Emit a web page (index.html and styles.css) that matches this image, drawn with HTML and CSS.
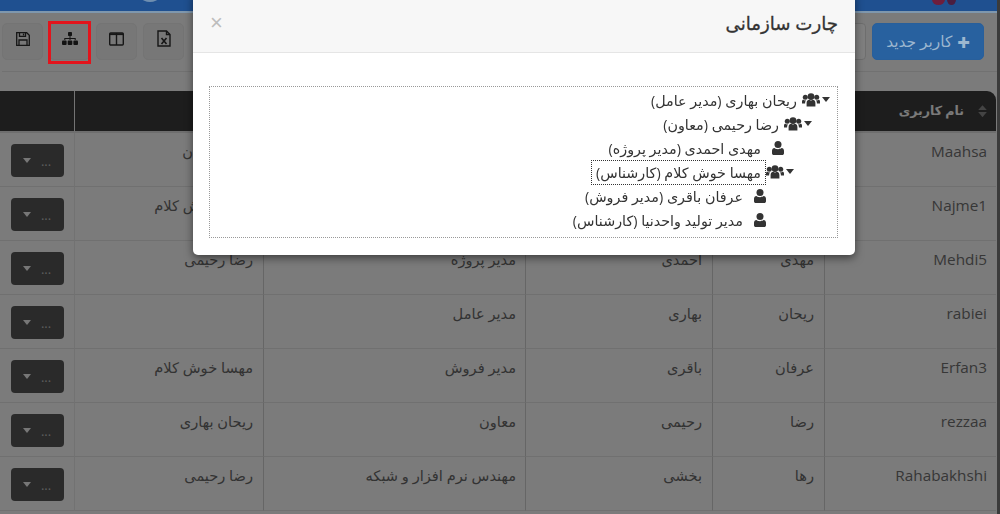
FILE: index.html
```html
<!DOCTYPE html>
<html lang="fa" dir="rtl">
<head>
  <meta charset="UTF-8">
  <meta name="viewport" content="width=device-width, initial-scale=1.0">
  <title>مدیریت کاربران</title>
  <link rel="stylesheet" href="styles.css">
</head>
<body>
  <svg class="icon-defs" width="0" height="0">
    <defs>
      <symbol id="i-users" viewBox="0 0 18 14">
        <circle cx="9" cy="3.6" r="3.4"/>
        <circle cx="3.3" cy="4.3" r="2.5"/>
        <circle cx="14.7" cy="4.3" r="2.5"/>
        <path d="M4.6 13.6V10c0-2 1.4-3.2 2.6-3.2.6.5 1.1.8 1.8.8s1.200-.3 1.800-.8c1.200 0 2.600 1.200 2.600 3.200v3.600z"/>
        <path d="M0 10.400V8.400c0-.9.600-1.600 1.500-1.600.5.400 1 .6 1.700.6.300 0 .6 0 .9-.1-.7.800-1 1.700-1 2.700v.4zM18 10.400V8.400c0-.9-.6-1.600-1.500-1.600-.5.400-1 .6-1.700.6-.3 0-.6 0-.9-.1.700.800 1 1.700 1 2.700v.4z"/>
      </symbol>
      <symbol id="i-user" viewBox="0 0 12 14">
        <circle cx="6" cy="3.500" r="3.500"/>
        <path d="M0 12.200V9.800c0-1.500 1-2.700 2.400-2.700.9.800 2.200 1.200 3.600 1.200s2.700-.4 3.600-1.200c1.400 0 2.400 1.200 2.400 2.700v2.400c0 1-.8 1.800-1.800 1.800H1.800C.8 14 0 13.200 0 12.200z"/>
      </symbol>
    </defs>
  </svg>

  <header class="topbar">
    <span class="logo-light"></span>
    <span class="logo-dark"></span>
    <span class="logo-dark logo-dark-2"></span>
  </header>

  <div class="toolbar">
    <div class="toolbar-main">
      <button class="btn btn-primary"><span class="plus">&#10010;</span> کاربر جدید</button>
      <input class="search" type="text">
    </div>
    <div class="toolbar-tools">
      <button class="btn btn-tool" title="خروجی">
        <svg width="16" height="17" viewBox="0 0 16 17" fill="none" stroke="#2c2c2c" stroke-width="1.400"><path d="M2 1h8.500l3.500 3.500V16H2z"/><path d="M10.500 1v3.500H14"/><path d="M5.500 8l5 6M10.500 8l-5 6" stroke-width="1.600"/></svg>
      </button>
      <button class="btn btn-tool" title="ستون ها">
        <svg width="15" height="14" viewBox="0 0 15 14" fill="none" stroke="#2c2c2c" stroke-width="1.400"><rect x=".7" y="1" width="13.600" height="12" rx="1"/><path d="M7.500 1v12"/><path d="M.7 2.200h13.600" stroke-width="1.800"/></svg>
      </button>
      <button class="btn btn-tool btn-marked" title="چارت سازمانی">
        <svg width="16" height="13" viewBox="0 0 16 13" fill="#262626"><rect x="6" y="0" width="4" height="4" rx=".8"/><path d="M7.500 4h1v2h5.200v2h-1V7H8.500v1h-1V7H3.300v1h-1V6h5.200z"/><rect x="0" y="8.500" width="4.600" height="4.500" rx="1"/><rect x="5.700" y="8.500" width="4.600" height="4.500" rx="1"/><rect x="11.400" y="8.500" width="4.600" height="4.500" rx="1"/></svg>
        <span class="red-mark"></span>
      </button>
      <button class="btn btn-tool" title="ذخیره">
        <svg width="14" height="14" viewBox="0 0 14 14" fill="none" stroke="#2c2c2c" stroke-width="1.300"><path d="M.7.7h10l2.600 2.600v10H.7z"/><path d="M3.500.7v3.600h6V.7"/><path d="M7.500 1.500v2"/><path d="M3 13.300V8h8v5.300"/></svg>
      </button>
    </div>
  </div>

  <div class="table-wrap">
    <table class="users">
      <colgroup>
        <col class="col-user"><col class="col-name"><col class="col-family"><col class="col-job"><col class="col-boss"><col class="col-act">
      </colgroup>
      <thead>
        <tr>
          <th><span class="sort"></span>نام کاربری</th>
          <th>نام</th>
          <th>نام خانوادگی</th>
          <th>سمت</th>
          <th>مدیر</th>
          <th></th>
        </tr>
      </thead>
      <tbody>
        <tr><td class="latin">Maahsa</td><td>مهسا</td><td>خوش کلام</td><td>کارشناس</td><td>رضا رضایان</td><td class="act"><button class="btn-more">... <span class="caret"></span></button></td></tr>
        <tr><td class="latin">Najme1</td><td></td><td></td><td></td><td>مهسا خوش کلام</td><td class="act"><button class="btn-more">... <span class="caret"></span></button></td></tr>
        <tr><td class="latin">Mehdi5</td><td>مهدی</td><td>احمدی</td><td>مدیر پروژه</td><td>رضا رحیمی</td><td class="act"><button class="btn-more">... <span class="caret"></span></button></td></tr>
        <tr><td class="latin">rabiei</td><td>ریحان</td><td>بهاری</td><td>مدیر عامل</td><td></td><td class="act"><button class="btn-more">... <span class="caret"></span></button></td></tr>
        <tr><td class="latin">Erfan3</td><td>عرفان</td><td>باقری</td><td>مدیر فروش</td><td>مهسا خوش کلام</td><td class="act"><button class="btn-more">... <span class="caret"></span></button></td></tr>
        <tr><td class="latin">rezzaa</td><td>رضا</td><td>رحیمی</td><td>معاون</td><td>ریحان بهاری</td><td class="act"><button class="btn-more">... <span class="caret"></span></button></td></tr>
        <tr><td class="latin">Rahabakhshi</td><td>رها</td><td>بخشی</td><td>مهندس نرم افزار و شبکه</td><td>رضا رحیمی</td><td class="act"><button class="btn-more">... <span class="caret"></span></button></td></tr>
      </tbody>
    </table>
  </div>

  <div class="backdrop"></div>

  <div class="modal">
    <div class="modal-header">
      <h4 class="modal-title">چارت سازمانی</h4>
      <span class="close">&times;</span>
    </div>
    <div class="modal-body">
      <ul class="tree">
        <li class="node level-0">
          <span class="expander"><span class="caret"></span></span>
          <svg class="node-icon icon-users"><use href="#i-users"/></svg>
          <span class="node-title">ریحان بهاری (مدیر عامل)</span>
        </li>
        <li class="node level-1">
          <span class="expander"><span class="caret"></span></span>
          <svg class="node-icon icon-users"><use href="#i-users"/></svg>
          <span class="node-title">رضا رحیمی (معاون)</span>
        </li>
        <li class="node level-2">
          <span class="expander"></span>
          <svg class="node-icon icon-user"><use href="#i-user"/></svg>
          <span class="node-title">مهدی احمدی (مدیر پروژه)</span>
        </li>
        <li class="node level-2">
          <span class="expander"><span class="caret"></span></span>
          <svg class="node-icon icon-users"><use href="#i-users"/></svg>
          <span class="node-title node-focused">مهسا خوش کلام (کارشناس)</span>
        </li>
        <li class="node level-3">
          <span class="expander"></span>
          <svg class="node-icon icon-user"><use href="#i-user"/></svg>
          <span class="node-title">عرفان باقری (مدیر فروش)</span>
        </li>
        <li class="node level-3">
          <span class="expander"></span>
          <svg class="node-icon icon-user"><use href="#i-user"/></svg>
          <span class="node-title">مدیر تولید واحدنیا (کارشناس)</span>
        </li>
      </ul>
    </div>
  </div>
</body>
</html>
```

FILE: styles.css
```css
* {
  box-sizing: border-box;
}

html, body {
  height: 514px;
  overflow: hidden;
}

body {
  margin: 0;
  background: #f6f6f6;
  border-right: 3px solid #777;
  color: #666;
  font-family: "Open Sans", "DejaVu Sans", sans-serif;
  font-size: 14px;
}

.icon-defs {
  position: absolute;
}

/* Top bar, kept over the backdrop with its dimmed colour */
.topbar {
  height: 13px;
  background: #1f5090;
  border-bottom: 2px solid #7f97ad;
  overflow: hidden;
  position: relative;
  z-index: 1045;
}

.logo-dark {
  position: absolute;
  right: 52px;
  top: -6px;
  width: 13px;
  height: 11px;
  background: #6e1e3c;
  border-radius: 50%;
}

.logo-dark-2 {
  right: 41px;
  width: 9px;
  background: #4a1e40;
}

.logo-light {
  position: absolute;
  left: 142px;
  top: -6px;
  width: 16px;
  height: 8px;
  background: #6f8fb0;
  border-radius: 50%;
}

/* Toolbar */
.toolbar {
  display: flex;
  justify-content: space-between;
  height: 59px;
  margin: 0 0 0 2px;
  padding: 10px 13px 0 0;
  border-bottom: 1px solid #e3e3e3;
}

.toolbar-main, .toolbar-tools {
  display: flex;
  gap: 6px;
  height: 37px;
}

.btn {
  height: 37px;
  border: 1px solid #e8e8e8;
  border-radius: 5px;
  background: #eeeeee;
  font-family: inherit;
  padding: 0;
  display: flex;
  align-items: center;
  justify-content: center;
}

.btn-primary {
  width: 112px;
  background: #28619f;
  border-color: #285f9b;
  color: #9db7cf;
  font-size: 15.400px;
  gap: 5px;
  position: relative;
  z-index: 1045;
}

.plus {
  font-size: 15px;
}

.search {
  width: 300px;
  height: 37px;
  border: 1px solid #ddd;
  border-radius: 4px;
  background: #fff;
}

.btn-tool {
  width: 41px;
  padding-bottom: 6px;
}

.btn-marked {
  position: relative;
}

/* Red box drawn over the dimmed page */
.red-mark {
  position: absolute;
  top: -3px;
  left: -2px;
  width: 43px;
  height: 43px;
  border: 3px solid #e2141c;
  z-index: 1060;
}

/* Users table */
.table-wrap {
  margin-top: 19px;
  padding-right: 1px;
}

.users {
  width: 996px;
  table-layout: fixed;
  border-collapse: separate;
  border-spacing: 0;
}

.col-user { width: 172px; }
.col-name { width: 112px; }
.col-family { width: 187px; }
.col-job { width: 262px; }
.col-boss { width: 189px; }
.col-act { width: 74px; }

.users th {
  height: 42px;
  background: #3a3a3a;
  color: #f4f4f4;
  font-size: 12.600px;
  text-align: right;
  padding: 0 9px 2px 0;
  border-bottom: 2px solid #ddd;
  border-left: 1px solid #e6e6e6;
}

.users th:first-child {
  border-top-right-radius: 9px;
}

.users th:last-child {
  border-left: none;
}

.sort {
  display: inline-block;
  width: 9px;
  height: 12px;
  margin-left: 14px;
  vertical-align: middle;
  background: linear-gradient(#888, #888 42%, transparent 42%, transparent 55%, #888 55%);
  clip-path: polygon(50% 0, 100% 42%, 100% 55%, 50% 100%, 0 55%, 0 42%);
}

.users td {
  height: 54px;
  padding: 8px 10px 0 0;
  vertical-align: top;
  text-align: right;
  font-size: 14.600px;
  line-height: 20px;
  border-bottom: 1px solid #e0e0e0;
  border-left: 1px solid #cccccc;
}

.users td:nth-child(4) {
  padding-right: 9px;
}

.users td:nth-child(5) {
  border-left-color: #e4e4e4;
}

.users td.latin {
  padding-right: 9px;
  font-size: 15.300px;
  color: #6e6e6e;
}

.users td.act {
  border-left: none;
  padding: 11px 0 0;
  text-align: center;
}

.btn-more {
  display: inline-flex;
  align-items: center;
  justify-content: center;
  gap: 10px;
  width: 53px;
  height: 33px;
  border: none;
  border-radius: 4px;
  background: #555;
  color: #bbb;
  font-family: inherit;
  font-size: 13px;
  padding: 0;
}

.caret {
  display: inline-block;
  border-top: 5px solid currentColor;
  border-left: 4.500px solid transparent;
  border-right: 4.500px solid transparent;
}

.btn-more .caret {
  color: #eee;
}

.backdrop {
  position: fixed;
  inset: 0;
  background: rgba(0, 0, 0, 0.5);
  z-index: 1040;
}

/* Modal */
.modal {
  position: fixed;
  top: -7px;
  left: 193px;
  width: 662px;
  background: #fff;
  border-radius: 0 0 5px 5px;
  box-shadow: 0 3px 9px rgba(0, 0, 0, 0.5);
  z-index: 1050;
}

.modal-header {
  display: flex;
  justify-content: space-between;
  align-items: center;
  height: 60px;
  padding: 0 17px;
  background: #f7f7f7;
  border-bottom: 1px solid #e5e5e5;
}

.modal-title {
  margin: 0;
  font-size: 18.200px;
  font-weight: 400;
  -webkit-text-stroke: 0.300px #333;
  color: #333;
}

.close {
  color: #bdbdbd;
  font-size: 22px;
  font-family: "Liberation Sans", sans-serif;
  line-height: 1;
}

.modal-body {
  padding: 33px 17px 17px 16px;
}

/* Tree */
.tree {
  list-style: none;
  margin: 0;
  padding: 1px 0 5px;
  height: 152px;
  border: 1px dotted #999;
  color: #333;
  font-size: 14.300px;
}

.node {
  display: flex;
  align-items: center;
  height: 24px;
}

.level-1 { padding-right: 18px; }
.level-2 { padding-right: 36px; }
.level-3 { padding-right: 54px; }

.expander {
  display: flex;
  justify-content: flex-end;
  padding-left: 2px;
  padding-bottom: 2px;
  width: 17px;
  flex: none;
}

.expander .caret {
  color: #333;
}

.node-icon {
  flex: none;
  fill: #333;
  height: 14px;
}

.icon-users {
  width: 18px;
}

.icon-user {
  width: 12px;
  margin-left: 6px;
}

.node-title {
  padding: 0 4px;
  line-height: 23px;
  border: 1px solid transparent;
  white-space: nowrap;
}

.node-focused {
  border: 1px dotted #333;
}
```
